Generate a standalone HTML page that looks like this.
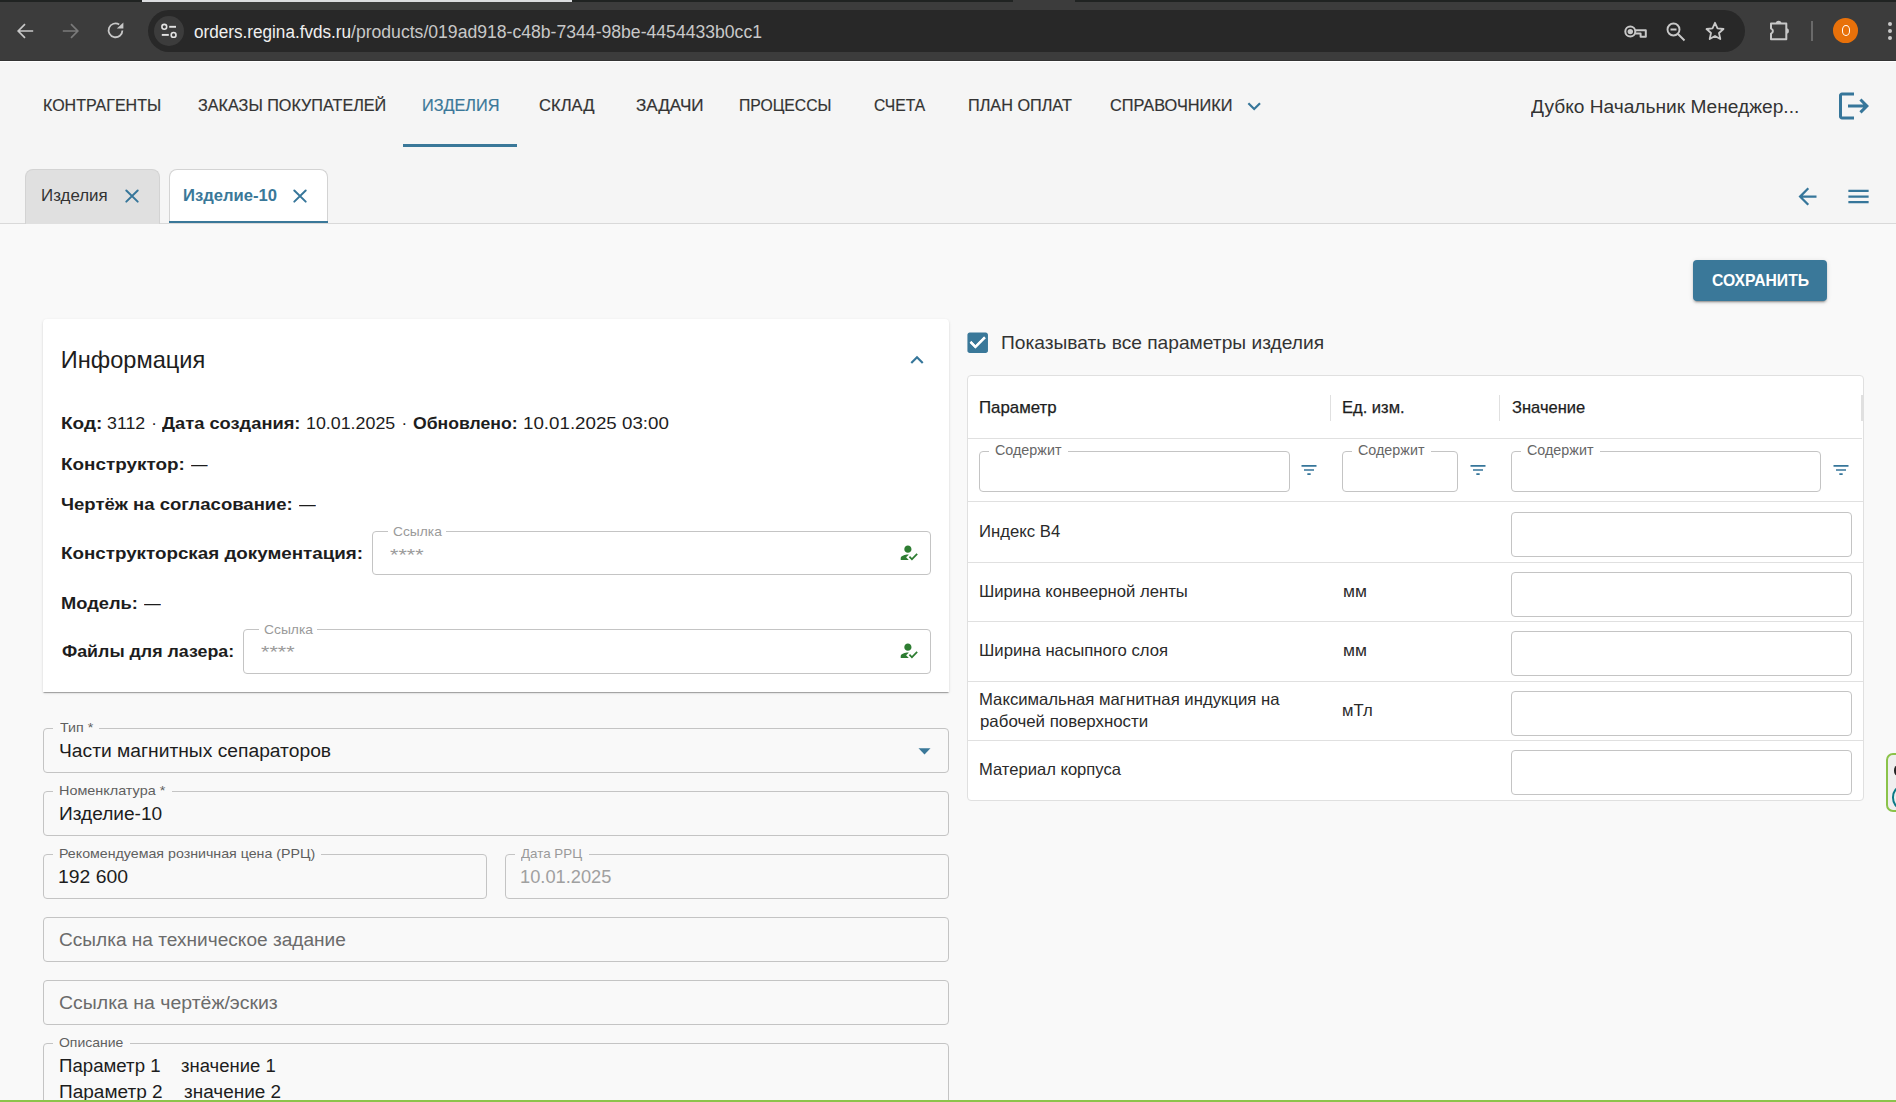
<!DOCTYPE html>
<html><head><meta charset="utf-8"><title>Изделие-10</title>
<style>
html,body{margin:0;padding:0;width:1896px;height:1102px;overflow:hidden;background:#f9f9f9}
.t{position:absolute;white-space:pre;line-height:1;font-family:"Liberation Sans",sans-serif}
.r{position:absolute;box-sizing:content-box}
</style></head><body>
<div class="r" style="left:0px;top:0px;width:1896px;height:61px;background:#3c3c3c"></div>
<div class="r" style="left:0px;top:0px;width:1896px;height:2px;background:#202322"></div>
<div class="r" style="left:142px;top:0px;width:430px;height:2px;background:#dcdde0"></div>
<div class="r" style="left:1013px;top:0px;width:62px;height:2px;background:#3c3c3c"></div>
<div class="r" style="left:0px;top:60px;width:1896px;height:1px;background:#333"></div>
<div class="r" style="left:0px;top:61px;width:1896px;height:1px;background:#fff"></div>
<div class="r" style="left:148px;top:10px;width:1597px;height:42px;background:#282828;border-radius:21px"></div>
<div class="r" style="left:154px;top:16px;width:30px;height:30px;border-radius:50%;background:#3c3c3c"></div>
<svg class="r" style="left:150px;top:14px" width="34" height="34" viewBox="150 14 34 34"><g fill="none" stroke="#e3e3e3" stroke-width="1.6"><circle cx="164.3" cy="26.8" r="2.4"/><circle cx="173.6" cy="34.9" r="2.4"/></g><g stroke="#e3e3e3" stroke-width="1.9"><line x1="169.2" y1="26.8" x2="176" y2="26.8"/><line x1="161.8" y1="34.9" x2="168.8" y2="34.9"/></g></svg>
<svg class="r" style="left:15px;top:20px" width="22" height="22" viewBox="0 0 22 22"><path d="M18.2 11H3.5M10 4.2L3.2 11 10 17.8" fill="none" stroke="#c8c8c8" stroke-width="1.7"/></svg>
<svg class="r" style="left:59px;top:20px" width="22" height="22" viewBox="0 0 22 22"><path d="M3.8 11h14.7M12 4.2l6.8 6.8L12 17.8" fill="none" stroke="#7a7a7a" stroke-width="1.7"/></svg>
<svg class="r" style="left:100px;top:14px" width="34" height="34" viewBox="100 14 34 34"><path d="M122.4 30.4A6.9 6.9 0 1 1 119.2 24.5" fill="none" stroke="#c8c8c8" stroke-width="1.8"/><path d="M116.8 28.4H123.4V22.4Z" fill="#c8c8c8"/></svg>
<div class="t" style="left:193.88px;top:23.10px;font-size:18px;color:#f0f0f0;font-weight:400;transform:scaleX(0.9515);transform-origin:0 0;">orders.regina.fvds.ru</div>
<div class="t" style="left:350.87px;top:23.10px;font-size:18px;color:#c8c8c8;font-weight:400;transform:scaleX(0.9778);transform-origin:0 0;">/products/019ad918-c48b-7344-98be-4454433b0cc1</div>
<svg class="r" style="left:1615px;top:14px" width="40" height="34" viewBox="1615 14 40 34"><circle cx="1630.3" cy="31.6" r="5" fill="none" stroke="#c8c8c8" stroke-width="2"/><circle cx="1630.3" cy="31.6" r="2.7" fill="#c8c8c8"/><path d="M1635.3 30.2H1645.8V36.8H1640.6V33.4H1635.3" fill="none" stroke="#c8c8c8" stroke-width="2" stroke-linejoin="round"/></svg>
<svg class="r" style="left:1665px;top:21px" width="22" height="22" viewBox="0 0 22 22"><g fill="none" stroke="#c8c8c8" stroke-width="1.9"><circle cx="8.5" cy="8.5" r="6"/><path d="M13 13l6.5 6.5M5.5 8.5h6"/></g></svg>
<svg class="r" style="left:1704px;top:20px" width="22" height="22" viewBox="0 0 22 22"><path d="M11 2.8l2.5 5.6 6 .6-4.5 4 1.3 6L11 16l-5.3 3 1.3-6-4.5-4 6-.6z" fill="none" stroke="#c8c8c8" stroke-width="1.8" stroke-linejoin="round"/></svg>
<svg class="r" style="left:1760px;top:12px" width="40" height="36" viewBox="1760 12 40 36"><path d="M1771 23.5H1786.3V39.2H1771V33.6A2.6 2.6 0 0 0 1771 28.6Z" fill="none" stroke="#c8c8c8" stroke-width="2" stroke-linejoin="round"/><path d="M1775.8 23.5A2.8 2.8 0 0 1 1781.4 23.5Z" fill="#c8c8c8"/><path d="M1786.3 28.3A2.6 2.6 0 0 1 1786.3 33.5Z" fill="#c8c8c8"/></svg>
<div class="r" style="left:1811px;top:21px;width:2px;height:20px;background:#6a6a6a"></div>
<div class="r" style="left:1833.2px;top:18.1px;width:24.7px;height:24.7px;border-radius:50%;background:#e8710a"></div>
<div class="r" style="left:1841.6px;top:25.4px;width:6.6px;height:8.6px;border-radius:50%;border:1px solid #fff"></div>
<div class="r" style="left:1888px;top:21.5px;width:4px;height:4px;border-radius:50%;background:#c8c8c8"></div>
<div class="r" style="left:1888px;top:28.5px;width:4px;height:4px;border-radius:50%;background:#c8c8c8"></div>
<div class="r" style="left:1888px;top:35.5px;width:4px;height:4px;border-radius:50%;background:#c8c8c8"></div>
<div class="r" style="left:0px;top:62px;width:1896px;height:161px;background:#f5f5f5"></div>
<div class="r" style="left:0px;top:223px;width:1896px;height:1px;background:#d9d9d9"></div>
<div class="t" style="left:42.87px;top:97.10px;font-size:16.5px;color:#333333;font-weight:400;transform:scaleX(0.9708);transform-origin:0 0;-webkit-text-stroke:0.2px #333333">КОНТРАГЕНТЫ</div>
<div class="t" style="left:197.90px;top:97.10px;font-size:16.5px;color:#333333;font-weight:400;transform:scaleX(0.9810);transform-origin:0 0;-webkit-text-stroke:0.2px #333333">ЗАКАЗЫ ПОКУПАТЕЛЕЙ</div>
<div class="t" style="left:421.62px;top:97.10px;font-size:16.5px;color:#3a7899;font-weight:400;transform:scaleX(0.9849);transform-origin:0 0;-webkit-text-stroke:0.2px #3a7899">ИЗДЕЛИЯ</div>
<div class="t" style="left:539.44px;top:97.10px;font-size:16.5px;color:#333333;font-weight:400;transform:scaleX(1.0054);transform-origin:0 0;-webkit-text-stroke:0.2px #333333">СКЛАД</div>
<div class="t" style="left:636.46px;top:97.10px;font-size:16.5px;color:#333333;font-weight:400;transform:scaleX(1.0361);transform-origin:0 0;-webkit-text-stroke:0.2px #333333">ЗАДАЧИ</div>
<div class="t" style="left:739.21px;top:97.10px;font-size:16.5px;color:#333333;font-weight:400;transform:scaleX(0.9527);transform-origin:0 0;-webkit-text-stroke:0.2px #333333">ПРОЦЕССЫ</div>
<div class="t" style="left:873.78px;top:97.10px;font-size:16.5px;color:#333333;font-weight:400;transform:scaleX(0.9477);transform-origin:0 0;-webkit-text-stroke:0.2px #333333">СЧЕТА</div>
<div class="t" style="left:968.27px;top:97.10px;font-size:16.5px;color:#333333;font-weight:400;transform:scaleX(0.9843);transform-origin:0 0;-webkit-text-stroke:0.2px #333333">ПЛАН ОПЛАТ</div>
<div class="t" style="left:1109.75px;top:97.10px;font-size:16.5px;color:#333333;font-weight:400;transform:scaleX(0.9896);transform-origin:0 0;-webkit-text-stroke:0.2px #333333">СПРАВОЧНИКИ</div>
<div class="r" style="left:403px;top:144px;width:114px;height:3px;background:#3a7899"></div>
<svg class="r" style="left:1241.3px;top:93.4px" width="26.4" height="26.4" viewBox="0 0 24 24"><path fill="#36769a" d="M16.59 8.59L12 13.17 7.41 8.59 6 10l6 6 6-6z"/></svg>
<div class="t" style="left:1530.97px;top:98.10px;font-size:18px;color:#333;font-weight:400;transform:scaleX(1.0634);transform-origin:0 0;">Дубко Начальник Менеджер...</div>
<svg class="r" style="left:1836px;top:88.1px" width="36" height="36" viewBox="0 0 24 24"><path fill="#36769a" d="M17 7l-1.41 1.41L18.17 11H8v2h10.17l-2.58 2.58L17 17l5-5zM4 5h8V3H4c-1.1 0-2 .9-2 2v14c0 1.1.9 2 2 2h8v-2H4V5z"/></svg>
<div class="r" style="left:25px;top:169px;width:133px;height:54px;background:#e0e0e0;border:1px solid #d3d3d3;border-bottom:none;border-radius:8px 8px 0 0"></div>
<div class="t" style="left:41.06px;top:187.30px;font-size:16.3px;color:#333;font-weight:400;transform:scaleX(1.0381);transform-origin:0 0;">Изделия</div>
<svg class="r" style="left:122.4px;top:186.3px" width="20" height="20" viewBox="0 0 20 20"><path d="M4.3 4.5l11.4 11.1M15.7 4.5L4.3 15.6" stroke="#36769a" stroke-width="2" stroke-linecap="round"/></svg>
<div class="r" style="left:169px;top:169px;width:157px;height:52px;background:#fff;border:1px solid #d3d3d3;border-bottom:none;border-radius:8px 8px 0 0"></div>
<div class="r" style="left:169px;top:221px;width:159px;height:2px;background:#3a7899"></div>
<div class="t" style="left:183.37px;top:187.30px;font-size:16.3px;color:#3a7899;font-weight:700;transform:scaleX(1.0217);transform-origin:0 0;">Изделие-10</div>
<svg class="r" style="left:290.4px;top:186.3px" width="20" height="20" viewBox="0 0 20 20"><path d="M4.3 4.5l11.4 11.1M15.7 4.5L4.3 15.6" stroke="#36769a" stroke-width="2" stroke-linecap="round"/></svg>
<svg class="r" style="left:1794.1px;top:183px" width="27" height="27" viewBox="0 0 24 24"><path fill="#36769a" d="M20 11H7.83l5.59-5.59L12 4l-8 8 8 8 1.41-1.41L7.83 13H20v-2z"/></svg>
<svg class="r" style="left:1844.8px;top:183.1px" width="27" height="27" viewBox="0 0 24 24"><path fill="#36769a" d="M3 18h18v-2H3v2zm0-5h18v-2H3v2zm0-7v2h18V6H3z"/></svg>
<div class="r" style="left:1693px;top:260px;width:134px;height:41px;background:#3a7899;border-radius:4px;box-shadow:0 3px 1px -2px rgba(0,0,0,.2),0 2px 2px 0 rgba(0,0,0,.14),0 1px 5px 0 rgba(0,0,0,.12)"></div>
<div class="t" style="left:1711.73px;top:272.10px;font-size:16.2px;color:#fff;font-weight:700;transform:scaleX(0.9706);transform-origin:0 0;">СОХРАНИТЬ</div>
<div class="r" style="left:43px;top:319px;width:906px;height:373px;background:#fff;border-radius:4px 4px 0 0;box-shadow:0 2px 1px -1px rgba(0,0,0,.2),0 1px 1px 0 rgba(0,0,0,.14),0 1px 3px 0 rgba(0,0,0,.12)"></div>
<div class="t" style="left:60.85px;top:349.10px;font-size:23.6px;color:#1d1d1d;font-weight:400;">Информация</div>
<svg class="r" style="left:904.4px;top:346.6px" width="26" height="26" viewBox="0 0 24 24"><path fill="#36769a" d="M12 8l-6 6 1.41 1.41L12 10.83l4.59 4.58L18 14z"/></svg>
<div class="t" style="left:61.26px;top:414.70px;font-size:17px;color:#1d1d1d;font-weight:700;transform:scaleX(1.1174);transform-origin:0 0;">Код:</div>
<div class="t" style="left:107.10px;top:414.70px;font-size:17px;color:#1d1d1d;font-weight:400;transform:scaleX(1.0460);transform-origin:0 0;">3112</div>
<div class="t" style="left:151.21px;top:414.70px;font-size:17px;color:#1d1d1d;font-weight:400;">·</div>
<div class="t" style="left:161.97px;top:414.70px;font-size:17px;color:#1d1d1d;font-weight:700;transform:scaleX(1.0758);transform-origin:0 0;">Дата создания:</div>
<div class="t" style="left:306.18px;top:414.70px;font-size:17px;color:#1d1d1d;font-weight:400;transform:scaleX(1.0484);transform-origin:0 0;">10.01.2025</div>
<div class="t" style="left:401.41px;top:414.70px;font-size:17px;color:#1d1d1d;font-weight:400;">·</div>
<div class="t" style="left:412.54px;top:414.70px;font-size:17px;color:#1d1d1d;font-weight:700;transform:scaleX(1.0359);transform-origin:0 0;">Обновлено:</div>
<div class="t" style="left:522.50px;top:414.70px;font-size:17px;color:#1d1d1d;font-weight:400;transform:scaleX(1.1024);transform-origin:0 0;">10.01.2025 03:00</div>
<div class="t" style="left:61.26px;top:455.60px;font-size:17px;color:#1d1d1d;font-weight:700;transform:scaleX(1.1105);transform-origin:0 0;">Конструктор:</div>
<div class="t" style="left:190.69px;top:455.60px;font-size:17px;color:#1d1d1d;font-weight:400;transform:scaleX(0.9739);transform-origin:0 0;">—</div>
<div class="t" style="left:61.39px;top:495.70px;font-size:17px;color:#1d1d1d;font-weight:700;transform:scaleX(1.0896);transform-origin:0 0;">Чертёж на согласование:</div>
<div class="t" style="left:298.59px;top:495.70px;font-size:17px;color:#1d1d1d;font-weight:400;transform:scaleX(0.9855);transform-origin:0 0;">—</div>
<div class="t" style="left:61.37px;top:545.40px;font-size:17px;color:#1d1d1d;font-weight:700;transform:scaleX(1.1050);transform-origin:0 0;">Конструкторская документация:</div>
<div class="t" style="left:61.40px;top:594.80px;font-size:17px;color:#1d1d1d;font-weight:700;transform:scaleX(1.0746);transform-origin:0 0;">Модель:</div>
<div class="t" style="left:143.89px;top:594.80px;font-size:17px;color:#1d1d1d;font-weight:400;transform:scaleX(0.9855);transform-origin:0 0;">—</div>
<div class="t" style="left:61.71px;top:643.20px;font-size:17px;color:#1d1d1d;font-weight:700;transform:scaleX(1.0479);transform-origin:0 0;">Файлы для лазера:</div>
<div class="r" style="left:372px;top:531px;width:557px;height:42px;border:1px solid #c4c4c4;border-radius:4px"></div>
<div class="r" style="left:388.4px;top:524.2px;width:57.9px;height:14px;background:#fff"></div>
<div class="t" style="left:392.58px;top:525.20px;font-size:13.6px;color:#9a9a9a;font-weight:400;transform:scaleX(1.0141);transform-origin:0 0;">Ссылка</div>
<div class="t" style="left:390.45px;top:547.60px;font-size:16px;color:#9a9a9a;font-weight:400;transform:scaleX(1.3461);transform-origin:0 0;">****</div>
<svg class="r" style="left:898.3px;top:542.1px" width="21.6" height="21.6" viewBox="0 0 24 24"><path fill="#2e7d32" d="M9 17l3-2.94c-.39-.04-.68-.06-1-.06-2.67 0-8 1.34-8 4v2h9l-3-3zm2-5c2.21 0 4-1.79 4-4s-1.79-4-4-4-4 1.79-4 4 1.79 4 4 4m4.47 8.5L12 17l1.4-1.41 2.07 2.08 5.13-5.17 1.4 1.41z"/></svg>
<div class="r" style="left:243px;top:629px;width:686px;height:43px;border:1px solid #c4c4c4;border-radius:4px"></div>
<div class="r" style="left:259.4px;top:621.6px;width:58.1px;height:14px;background:#fff"></div>
<div class="t" style="left:263.58px;top:622.60px;font-size:13.6px;color:#9a9a9a;font-weight:400;transform:scaleX(1.0183);transform-origin:0 0;">Ссылка</div>
<div class="t" style="left:260.65px;top:645.40px;font-size:16px;color:#9a9a9a;font-weight:400;transform:scaleX(1.3461);transform-origin:0 0;">****</div>
<svg class="r" style="left:898.3px;top:640.1px" width="21.6" height="21.6" viewBox="0 0 24 24"><path fill="#2e7d32" d="M9 17l3-2.94c-.39-.04-.68-.06-1-.06-2.67 0-8 1.34-8 4v2h9l-3-3zm2-5c2.21 0 4-1.79 4-4s-1.79-4-4-4-4 1.79-4 4 1.79 4 4 4m4.47 8.5L12 17l1.4-1.41 2.07 2.08 5.13-5.17 1.4 1.41z"/></svg>
<div class="r" style="left:43px;top:728px;width:904px;height:43px;border:1px solid #c4c4c4;border-radius:4px"></div>
<div class="r" style="left:53.1px;top:719.9px;width:46.0px;height:14px;background:#f9f9f9"></div>
<div class="t" style="left:59.53px;top:720.90px;font-size:13.6px;color:#5f5f5f;font-weight:400;transform:scaleX(1.0460);transform-origin:0 0;">Тип *</div>
<div class="t" style="left:58.85px;top:741.80px;font-size:18px;color:#1d1d1d;font-weight:400;transform:scaleX(1.0694);transform-origin:0 0;">Части магнитных сепараторов</div>
<svg class="r" style="left:918px;top:748px" width="13" height="7" viewBox="0 0 13 7"><path d="M0.5 0.2h12L6.5 6.5z" fill="#3a7899"/></svg>
<div class="r" style="left:43px;top:791px;width:904px;height:43px;border:1px solid #c4c4c4;border-radius:4px"></div>
<div class="r" style="left:53.3px;top:783.1px;width:118.7px;height:14px;background:#f9f9f9"></div>
<div class="t" style="left:59.11px;top:784.10px;font-size:13.6px;color:#5f5f5f;font-weight:400;transform:scaleX(1.0595);transform-origin:0 0;">Номенклатура *</div>
<div class="t" style="left:58.50px;top:804.80px;font-size:18px;color:#1d1d1d;font-weight:400;transform:scaleX(1.0608);transform-origin:0 0;">Изделие-10</div>
<div class="r" style="left:43px;top:854px;width:442px;height:43px;border:1px solid #c4c4c4;border-radius:4px"></div>
<div class="r" style="left:52.7px;top:846.2px;width:268.0px;height:14px;background:#f9f9f9"></div>
<div class="t" style="left:58.52px;top:847.20px;font-size:13.6px;color:#5f5f5f;font-weight:400;transform:scaleX(1.0452);transform-origin:0 0;">Рекомендуемая розничная цена (РРЦ)</div>
<div class="t" style="left:57.98px;top:867.60px;font-size:18px;color:#1d1d1d;font-weight:400;transform:scaleX(1.0764);transform-origin:0 0;">192 600</div>
<div class="r" style="left:505px;top:854px;width:442px;height:43px;border:1px solid #c4c4c4;border-radius:4px"></div>
<div class="r" style="left:514.6px;top:846.2px;width:74.7px;height:14px;background:#f9f9f9"></div>
<div class="t" style="left:521.47px;top:847.20px;font-size:13.6px;color:#9a9a9a;font-weight:400;transform:scaleX(0.9832);transform-origin:0 0;">Дата РРЦ</div>
<div class="t" style="left:519.96px;top:867.60px;font-size:18px;color:#a0a0a0;font-weight:400;transform:scaleX(1.0146);transform-origin:0 0;">10.01.2025</div>
<div class="r" style="left:43px;top:917px;width:904px;height:43px;border:1px solid #c4c4c4;border-radius:4px"></div>
<div class="t" style="left:58.60px;top:930.60px;font-size:18px;color:#6b6b6b;font-weight:400;transform:scaleX(1.0599);transform-origin:0 0;">Ссылка на техническое задание</div>
<div class="r" style="left:43px;top:980px;width:904px;height:43px;border:1px solid #c4c4c4;border-radius:4px"></div>
<div class="t" style="left:58.58px;top:993.60px;font-size:18px;color:#6b6b6b;font-weight:400;transform:scaleX(1.0813);transform-origin:0 0;">Ссылка на чертёж/эскиз</div>
<div class="r" style="left:43px;top:1043px;width:904px;height:95px;border:1px solid #c4c4c4;border-radius:4px"></div>
<div class="r" style="left:53.0px;top:1035.2px;width:76.8px;height:14px;background:#f9f9f9"></div>
<div class="t" style="left:59.10px;top:1036.20px;font-size:13.6px;color:#5f5f5f;font-weight:400;transform:scaleX(1.0282);transform-origin:0 0;">Описание</div>
<div class="t" style="left:58.75px;top:1056.90px;font-size:18px;color:#1d1d1d;font-weight:400;transform:scaleX(1.0360);transform-origin:0 0;">Параметр 1</div>
<div class="t" style="left:181.32px;top:1056.90px;font-size:18px;color:#1d1d1d;font-weight:400;transform:scaleX(1.0276);transform-origin:0 0;">значение 1</div>
<div class="t" style="left:58.72px;top:1082.70px;font-size:18px;color:#1d1d1d;font-weight:400;transform:scaleX(1.0569);transform-origin:0 0;">Параметр 2</div>
<div class="t" style="left:183.70px;top:1082.70px;font-size:18px;color:#1d1d1d;font-weight:400;transform:scaleX(1.0530);transform-origin:0 0;">значение 2</div>
<div class="r" style="left:0px;top:1100px;width:1896px;height:2px;background:#8bc34a"></div>
<svg class="r" style="left:963.8px;top:328.9px" width="27.4" height="27.4" viewBox="0 0 24 24"><path fill="#3a7899" d="M19 3H5c-1.11 0-2 .9-2 2v14c0 1.1.89 2 2 2h14c1.11 0 2-.9 2-2V5c0-1.1-.89-2-2-2zm-9 14l-5-5 1.41-1.41L10 14.17l7.59-7.59L19 8l-9 9z"/><path fill="#fff" d="M10 17l-5-5 1.41-1.41L10 14.17l7.59-7.59L19 8l-9 9z"/></svg>
<div class="t" style="left:1001.40px;top:335.10px;font-size:17.7px;color:#333;font-weight:400;transform:scaleX(1.0847);transform-origin:0 0;">Показывать все параметры изделия</div>
<div class="r" style="left:967px;top:375px;width:895px;height:424px;background:#fff;border:1px solid #e0e0e0;border-radius:4px"></div>
<div class="t" style="left:979.21px;top:398.80px;font-size:17px;color:#1d1d1d;font-weight:400;transform:scaleX(0.9896);transform-origin:0 0;-webkit-text-stroke:0.25px #1d1d1d">Параметр</div>
<div class="t" style="left:1342.20px;top:398.80px;font-size:17px;color:#1d1d1d;font-weight:400;transform:scaleX(0.9725);transform-origin:0 0;-webkit-text-stroke:0.25px #1d1d1d">Ед. изм.</div>
<div class="t" style="left:1511.83px;top:398.80px;font-size:17px;color:#1d1d1d;font-weight:400;transform:scaleX(0.9706);transform-origin:0 0;-webkit-text-stroke:0.25px #1d1d1d">Значение</div>
<div class="r" style="left:1330px;top:395px;width:1px;height:26px;background:#e0e0e0"></div>
<div class="r" style="left:1499px;top:395px;width:1px;height:26px;background:#e0e0e0"></div>
<div class="r" style="left:1861px;top:395px;width:2px;height:26px;background:#e0e0e0"></div>
<div class="r" style="left:968px;top:438px;width:894px;height:1px;background:#e0e0e0"></div>
<div class="r" style="left:979px;top:451px;width:309px;height:39px;border:1px solid #c4c4c4;border-radius:4px"></div>
<div class="r" style="left:989.1px;top:443.3px;width:79.1px;height:14px;background:#fff"></div>
<div class="t" style="left:995.16px;top:443.30px;font-size:14px;color:#666;font-weight:400;transform:scaleX(1.0234);transform-origin:0 0;">Содержит</div>
<svg class="r" style="left:1299px;top:460px" width="20" height="20" viewBox="0 0 24 24"><path fill="#36769a" d="M10 18h4v-2h-4v2zM3 6v2h18V6H3zm3 7h12v-2H6v2z"/></svg>
<div class="r" style="left:1342px;top:451px;width:114px;height:39px;border:1px solid #c4c4c4;border-radius:4px"></div>
<div class="r" style="left:1352.1px;top:443.3px;width:79.1px;height:14px;background:#fff"></div>
<div class="t" style="left:1358.16px;top:443.30px;font-size:14px;color:#666;font-weight:400;transform:scaleX(1.0234);transform-origin:0 0;">Содержит</div>
<svg class="r" style="left:1468.2px;top:460px" width="20" height="20" viewBox="0 0 24 24"><path fill="#36769a" d="M10 18h4v-2h-4v2zM3 6v2h18V6H3zm3 7h12v-2H6v2z"/></svg>
<div class="r" style="left:1511px;top:451px;width:308px;height:39px;border:1px solid #c4c4c4;border-radius:4px"></div>
<div class="r" style="left:1521.0px;top:443.3px;width:79.1px;height:14px;background:#fff"></div>
<div class="t" style="left:1527.06px;top:443.30px;font-size:14px;color:#666;font-weight:400;transform:scaleX(1.0234);transform-origin:0 0;">Содержит</div>
<svg class="r" style="left:1830.9px;top:460px" width="20" height="20" viewBox="0 0 24 24"><path fill="#36769a" d="M10 18h4v-2h-4v2zM3 6v2h18V6H3zm3 7h12v-2H6v2z"/></svg>
<div class="r" style="left:968px;top:501px;width:895px;height:1px;background:#e0e0e0"></div>
<div class="r" style="left:968px;top:562px;width:895px;height:1px;background:#e0e0e0"></div>
<div class="r" style="left:968px;top:621px;width:895px;height:1px;background:#e0e0e0"></div>
<div class="r" style="left:968px;top:681px;width:895px;height:1px;background:#e0e0e0"></div>
<div class="r" style="left:968px;top:740px;width:895px;height:1px;background:#e0e0e0"></div>
<div class="t" style="left:979.27px;top:523.10px;font-size:16.5px;color:#2a2a2a;font-weight:400;transform:scaleX(1.0122);transform-origin:0 0;">Индекс B4</div>
<div class="t" style="left:979.28px;top:582.90px;font-size:16.5px;color:#2a2a2a;font-weight:400;transform:scaleX(1.0093);transform-origin:0 0;">Ширина конвеерной ленты</div>
<div class="t" style="left:1342.62px;top:582.90px;font-size:16.5px;color:#2a2a2a;font-weight:400;transform:scaleX(1.0534);transform-origin:0 0;">мм</div>
<div class="t" style="left:979.28px;top:642.30px;font-size:16.5px;color:#2a2a2a;font-weight:400;transform:scaleX(1.0121);transform-origin:0 0;">Ширина насыпного слоя</div>
<div class="t" style="left:1342.62px;top:642.30px;font-size:16.5px;color:#2a2a2a;font-weight:400;transform:scaleX(1.0534);transform-origin:0 0;">мм</div>
<div class="t" style="left:979.27px;top:691.00px;font-size:16.5px;color:#2a2a2a;font-weight:400;transform:scaleX(1.0127);transform-origin:0 0;">Максимальная магнитная индукция на</div>
<div class="t" style="left:979.77px;top:713.10px;font-size:16.5px;color:#2a2a2a;font-weight:400;transform:scaleX(1.0213);transform-origin:0 0;">рабочей поверхности</div>
<div class="t" style="left:1342.46px;top:702.40px;font-size:16.5px;color:#2a2a2a;font-weight:400;transform:scaleX(1.0106);transform-origin:0 0;">мТл</div>
<div class="t" style="left:979.29px;top:761.10px;font-size:16.5px;color:#2a2a2a;font-weight:400;transform:scaleX(1.0046);transform-origin:0 0;">Материал корпуса</div>
<div class="r" style="left:1511px;top:512px;width:339px;height:43px;border:1px solid #c4c4c4;border-radius:4px"></div>
<div class="r" style="left:1511px;top:572px;width:339px;height:43px;border:1px solid #c4c4c4;border-radius:4px"></div>
<div class="r" style="left:1511px;top:631px;width:339px;height:43px;border:1px solid #c4c4c4;border-radius:4px"></div>
<div class="r" style="left:1511px;top:691px;width:339px;height:43px;border:1px solid #c4c4c4;border-radius:4px"></div>
<div class="r" style="left:1511px;top:750px;width:339px;height:43px;border:1px solid #c4c4c4;border-radius:4px"></div>
<div class="r" style="left:1886px;top:753px;width:20px;height:55px;border:2px solid #8bc34a;border-radius:7px;background:#efefef"></div>
<div class="r" style="left:1894px;top:764.5px;width:8px;height:11px;border-radius:50%;background:#222"></div>
<div class="r" style="left:1892px;top:786px;width:14px;height:18.5px;border-radius:50%;border:2px solid #0b7a86"></div>
</body></html>
